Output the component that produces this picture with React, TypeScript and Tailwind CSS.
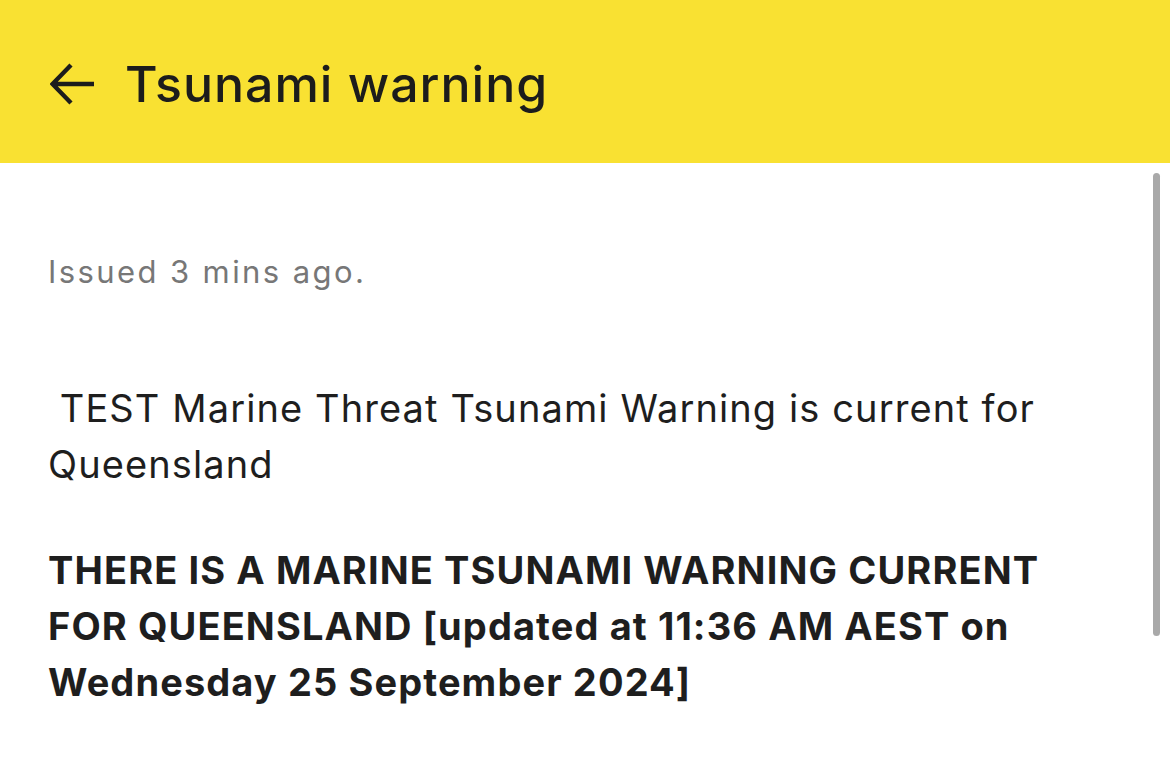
import React from "react";

export default function App() {
  return (
    <div className="relative w-[1170px] h-[777px] overflow-hidden bg-white">
      <header className="flex h-[163px] items-center bg-[#f9e132] pl-[50px] pt-[4px]">
        <svg width="46" height="42" viewBox="0 0 46 42" className="shrink-0">
          <path d="M44 21H3M21 2L2.5 21L21 40" fill="none" stroke="#1c1c1c" strokeWidth="4.4" />
        </svg>
        <h1 className="ml-[29px] text-[50px] leading-none font-medium text-[#1c1c1c] font-['Inter',sans-serif] tracking-[1px]">
          Tsunami warning
        </h1>
      </header>
      <main className="px-[48px] pt-[91px] font-['Inter',sans-serif] text-[#1e1e1e]">
        <p className="text-[31px] leading-[36px] text-[#777777] tracking-[2.4px]">Issued 3 mins ago.</p>
        <p className="mt-[90px] text-[38px] leading-[56px] tracking-[1.1px] whitespace-pre-wrap">{" TEST Marine Threat Tsunami Warning is current for\nQueensland"}</p>
        <p className="mt-[50px] text-[38px] leading-[56px] font-bold tracking-[1.1px]">
          THERE IS A MARINE TSUNAMI WARNING CURRENT FOR QUEENSLAND [updated at 11:36 AM AEST on Wednesday 25 September 2024]
        </p>
      </main>
      <div className="absolute right-[10px] top-[173px] h-[463px] w-[7px] rounded-full bg-[#a9a9a9]" />
    </div>
  );
}
